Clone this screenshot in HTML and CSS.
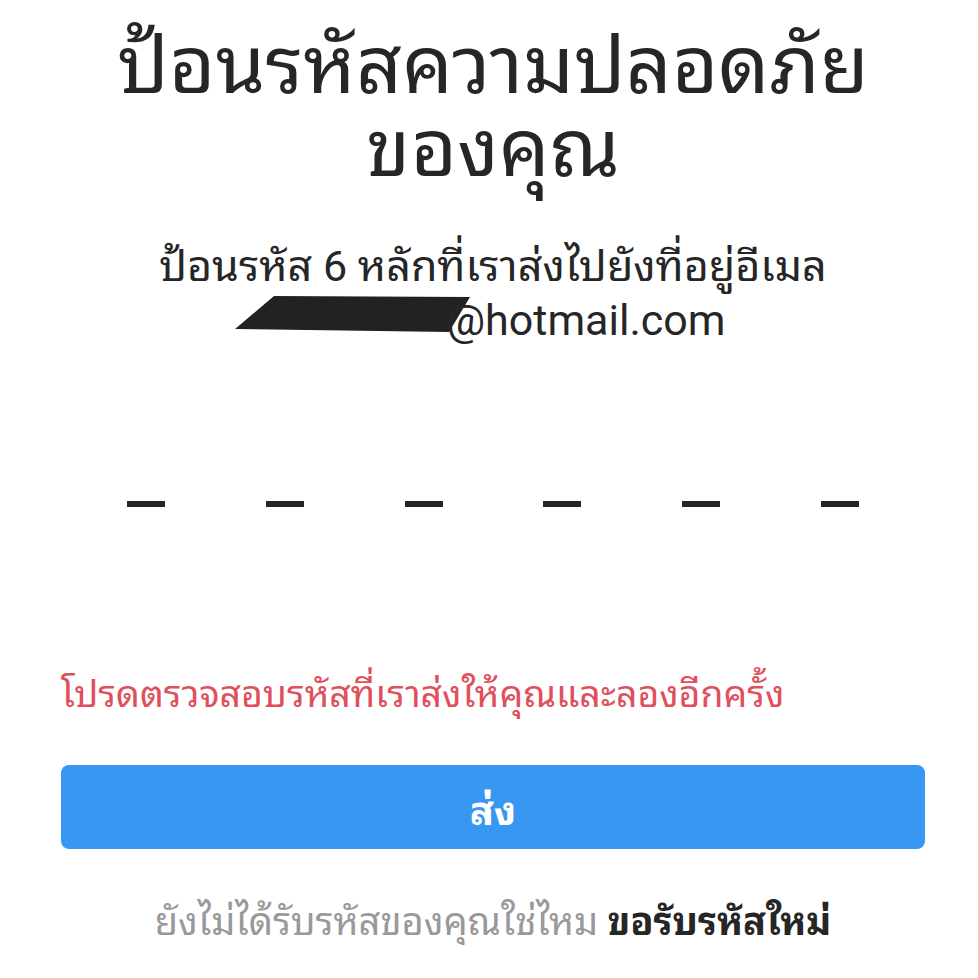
FILE: index.html
```html
<!DOCTYPE html>
<html lang="th">
<head>
<meta charset="utf-8">
<link rel="stylesheet" href="styles.css">
</head>
<body>
<main class="page">
  <h1 class="title">ป้อนรหัสความปลอดภัย<br>ของคุณ</h1>
  <p class="subtitle">ป้อนรหัส 6 หลักที่เราส่งไปยังที่อยู่อีเมล<br><span class="email"><svg class="redact" width="214" height="36" viewBox="0 0 214 36"><path d="M0 33 L39 0 L235 1 L214 36 Z" fill="#222"/></svg>@hotmail.com</span></p>
  <div class="code">
    <span class="slot"><i class="dash"></i></span>
    <span class="slot"><i class="dash"></i></span>
    <span class="slot"><i class="dash"></i></span>
    <span class="slot"><i class="dash"></i></span>
    <span class="slot"><i class="dash"></i></span>
    <span class="slot"><i class="dash"></i></span>
  </div>
  <p class="error">โปรดตรวจสอบรหัสที่เราส่งให้คุณและลองอีกครั้ง</p>
  <button class="submit">ส่ง</button>
  <p class="footer">ยังไม่ได้รับรหัสของคุณใช่ไหม <b class="link">ขอรับรหัสใหม่</b></p>
</main>
</body>
</html>
```
FILE: styles.css
```css
html, body {
  margin: 0;
  padding: 0;
  background: #fff;
}
body {
  font-family: Roboto, "Noto Sans Thai Looped", sans-serif;
  color: #262626;
}
.page {
  padding: 0 53px 0 61px;
  display: flex;
  flex-direction: column;
  align-items: stretch;
}
.title {
  margin: 25px 0 0;
  font-size: 80px;
  line-height: 83px;
  font-weight: 400;
  text-align: center;
}
.subtitle {
  margin: 48px 0 0;
  font-size: 43px;
  line-height: 54px;
  text-align: center;
}
.email {
  margin-left: -26px;
}
.redact {
  display: inline-block;
  vertical-align: 3px;
  margin-right: -2px;
  overflow: visible;
}
.code {
  margin-top: 154px;
  padding: 0 16px;
  display: grid;
  grid-template-columns: repeat(6, 1fr);
}
.slot {
  display: flex;
  justify-content: center;
}
.dash {
  display: block;
  width: 38px;
  height: 6px;
  background: #262626;
}
.error {
  margin: 164px 0 0;
  color: #e0505c;
  font-size: 37.4px;
  line-height: 46px;
}
.submit {
  margin-top: 48px;
  height: 84px;
  border: 0;
  border-radius: 8px;
  background: #3897f0;
  color: #fff;
  font-family: inherit;
  font-size: 40px;
  font-weight: 700;
}
.footer {
  margin: 50px 0 0;
  font-size: 38px;
  line-height: 46px;
  text-align: center;
  color: #999;
}
.link {
  color: #262626;
  font-weight: 700;
}
```
